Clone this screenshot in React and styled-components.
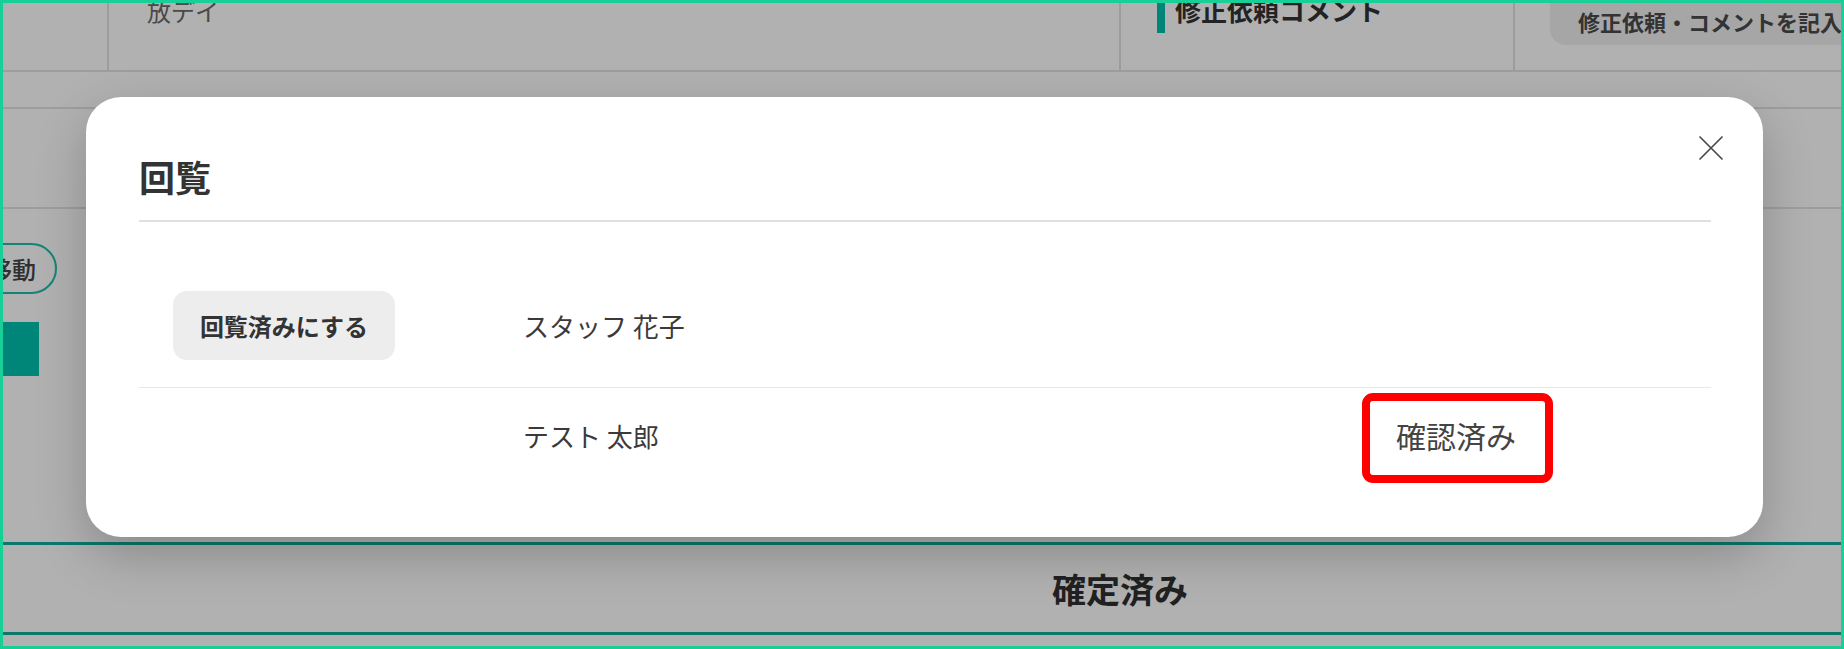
import React from 'react'
import styled, { createGlobalStyle } from 'styled-components'

const GlobalStyle = createGlobalStyle`
  html, body {
    margin: 0;
    padding: 0;
    background: #ffffff;
  }
  body {
    font-family: "Noto Sans CJK JP", "Noto Sans", sans-serif;
    color: #333333;
  }
  * {
    box-sizing: border-box;
  }
`

const Frame = styled.div`
  position: relative;
  width: 1844px;
  height: 649px;
  border: 3px solid #19cf98;
  background: #ffffff;
  overflow: hidden;
`

const Page = styled.div`
  display: flex;
  flex-direction: column;
`

const TopRow = styled.div`
  display: grid;
  grid-template-columns: 106px 1012px 394px 1fr;
  height: 93px;
  margin-top: -24px;
  border-bottom: 2px solid #e3e3e3;
`

const Cell = styled.div`
  display: flex;
  align-items: flex-start;
  overflow: hidden;
  border-right: ${p => (p.$last ? 'none' : '2px solid #e3e3e3')};
  padding-left: ${p => p.$pad || 0}px;
  padding-top: ${p => p.$top || 0}px;
`

const CellText = styled.span`
  font-size: 24px;
  line-height: 24px;
  color: #6a6a6a;
  white-space: nowrap;
`

const AccentBar = styled.span`
  width: 8px;
  height: 54px;
  background: #00c2ae;
  flex-shrink: 0;
`

const Heading = styled.span`
  margin: 18px 0 0 10px;
  font-size: 26px;
  line-height: 26px;
  font-weight: 700;
  color: #333333;
  white-space: nowrap;
`

const CommentButton = styled.button`
  flex-shrink: 0;
  height: 66px;
  width: 420px;
  margin-left: 35px;
  padding: 18px 0 0 28px;
  border: none;
  border-radius: 0 0 0 16px;
  background: #efefef;
  font-family: inherit;
  font-size: 22px;
  line-height: 22px;
  font-weight: 700;
  color: #4a4a4a;
  text-align: left;
  white-space: nowrap;
`

const Band = styled.div`
  height: ${p => p.$h}px;
  border-bottom: 2px solid #e3e3e3;
`

const Main = styled.div`
  height: 333px;
  display: flex;
  flex-direction: column;
  align-items: flex-start;
`

const MoveButton = styled.button`
  margin: 34px 0 0 -40px;
  height: 51px;
  padding: 0 19px 0 23px;
  border: 2px solid #22bda9;
  border-radius: 26px;
  background: #ffffff;
  font-family: inherit;
  font-size: 24px;
  font-weight: 500;
  color: #444444;
`

const GreenBlock = styled.div`
  margin-top: 28px;
  width: 36px;
  height: 54px;
  background: #00c2ae;
`

const Footer = styled.div`
  height: 93px;
  border-top: 3px solid #0fae9a;
  border-bottom: 3px solid #0fae9a;
  display: flex;
  align-items: center;
  justify-content: center;
  padding-left: 396px;
  font-size: 34px;
  font-weight: 700;
  color: #303030;
`

const Overlay = styled.div`
  position: absolute;
  inset: 0;
  background: rgba(0, 0, 0, 0.305);
  display: flex;
  align-items: flex-start;
  padding: 94px 0 0 83px;
`

const Modal = styled.div`
  position: relative;
  width: 1677px;
  background: #ffffff;
  border-radius: 35px;
  padding: 52px 52px 54px 53px;
  box-shadow: 0 18px 50px rgba(0, 0, 0, 0.22);
`

const ModalHeader = styled.div`
  display: flex;
  align-items: center;
  height: 73px;
  padding-bottom: 17px;
  border-bottom: 2px solid #e0e0e0;
`

const Title = styled.h2`
  margin: 0;
  font-size: 36px;
  line-height: 54px;
  font-weight: 700;
  color: #333333;
`

const CloseButton = styled.button`
  position: absolute;
  top: 39px;
  right: 40px;
  width: 24px;
  height: 24px;
  padding: 0;
  border: none;
  background: none;
  display: flex;
`

const ModalBody = styled.div`
  padding-top: 42px;
`

const Row = styled.div`
  display: grid;
  grid-template-columns: 384px 875px 1fr;
  align-items: center;
  padding: 27px 0;
  border-bottom: ${p => (p.$divider ? '1px solid #e9e9e9' : 'none')};
`

const ActionCell = styled.div`
  padding-left: 34px;
`

const CirculateButton = styled.button`
  height: 69px;
  width: 222px;
  border: none;
  border-radius: 14px;
  background: #ededed;
  font-family: inherit;
  font-size: 24px;
  font-weight: 700;
  color: #333333;
`

const Name = styled.span`
  font-size: 26px;
  line-height: 41px;
  color: #3a3a3a;
  white-space: nowrap;
`

const Status = styled.span`
  position: relative;
  justify-self: start;
  margin-left: -2px;
  font-size: 30px;
  line-height: 41px;
  color: #444444;
  white-space: nowrap;

  &::after {
    content: '';
    position: absolute;
    top: -22px;
    bottom: -27px;
    left: -34px;
    right: -37px;
    border: 8px solid #ff0000;
    border-radius: 11px;
  }
`

const CloseIcon = () => (
  <svg width="24" height="24" viewBox="0 0 24 24" fill="none">
    <path d="M1 1 L23 23 M23 1 L1 23" stroke="#4a4a4a" strokeWidth="1.7" strokeLinecap="round" />
  </svg>
)

const readers = [
  { name: 'スタッフ 花子', self: true, status: '' },
  { name: 'テスト 太郎', self: false, status: '確認済み' }
]

export default function App() {
  return (
    <>
      <GlobalStyle />
      <Frame>
        <Page>
          <TopRow>
            <Cell />
            <Cell $pad={38} $top={20}>
              <CellText>放デイ</CellText>
            </Cell>
            <Cell $pad={36}>
              <AccentBar />
              <Heading>修正依頼コメント</Heading>
            </Cell>
            <Cell $last>
              <CommentButton type="button">修正依頼・コメントを記入</CommentButton>
            </Cell>
          </TopRow>
          <Band $h={37} />
          <Band $h={100} />
          <Main>
            <MoveButton type="button">移動</MoveButton>
            <GreenBlock />
          </Main>
          <Footer>確定済み</Footer>
        </Page>

        <Overlay>
          <Modal>
            <ModalHeader>
              <Title>回覧</Title>
            </ModalHeader>
            <CloseButton type="button" aria-label="閉じる">
              <CloseIcon />
            </CloseButton>
            <ModalBody>
              {readers.map((r, i) => (
                <Row key={r.name} $divider={i < readers.length - 1}>
                  <ActionCell>
                    {r.self && <CirculateButton type="button">回覧済みにする</CirculateButton>}
                  </ActionCell>
                  <Name>{r.name}</Name>
                  {r.status ? <Status>{r.status}</Status> : <span />}
                </Row>
              ))}
            </ModalBody>
          </Modal>
        </Overlay>
      </Frame>
    </>
  )
}
